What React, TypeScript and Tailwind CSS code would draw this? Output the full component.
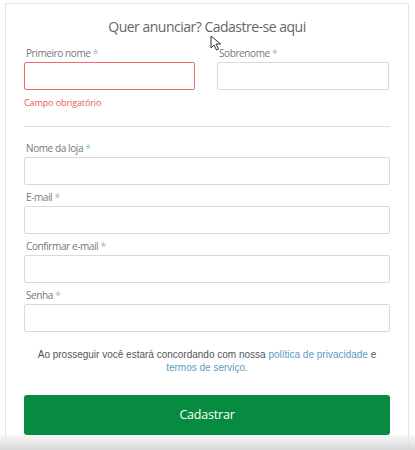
import React from "react";

const Label = ({ text }: { text: string }) => (
  <label className="block pl-[2px] text-[10px] leading-[14px] tracking-[-0.4px] text-[#777]">
    {text} <span className="text-[#8cbfd6]">*</span>
  </label>
);

const Field = ({ label, className = "" }: { label: string; className?: string }) => (
  <div className={className}>
    <Label text={label} />
    <input className="mt-[2px] block h-[28px] w-full rounded-[2px] border border-[#d9d9d9] bg-white outline-none" />
  </div>
);

export default function App() {
  return (
    <div
      className="relative h-[450px] w-[415px] overflow-hidden bg-white pt-[3px]"
      style={{ fontFamily: '"Open Sans", sans-serif' }}
    >
      <div className="ml-[5px] w-[404px] border border-[#e3e3e3] px-[18px] pb-[20px] pt-[13px]">
        <h1 className="text-center text-[14px] leading-[20px] tracking-[-0.5px] text-[#666]">
          Quer anunciar? Cadastre-se aqui
        </h1>

        {/* nome + sobrenome */}
        <div className="mt-[9px] flex gap-[22px]">
          <div className="w-[171px]">
            <Label text="Primeiro nome" />
            <input className="mt-[2px] block h-[28px] w-full rounded-[2px] border border-[#ef6b6b] bg-white outline-none" />
            <p className="mt-[6px] text-[9px] leading-[13px] tracking-[-0.1px] text-[#e25b52]">
              Campo obrigatório
            </p>
          </div>
          <div className="w-[172px]">
            <Label text="Sobrenome" />
            <input className="mt-[2px] block h-[28px] w-full rounded-[2px] border border-[#d9d9d9] bg-white outline-none" />
          </div>
        </div>

        <hr className="mt-[17px] border-t border-[#dcdcdc]" />

        <Field label="Nome da loja" className="mt-[14px]" />
        <Field label="E-mail" className="mt-[5px]" />
        <Field label="Confirmar e-mail" className="mt-[5px]" />
        <Field label="Senha" className="mt-[5px]" />

        <p
          className="mt-[16px] text-center text-[10px] leading-[13px] text-[#555]"
          style={{ fontFamily: '"Liberation Sans", Arial, sans-serif' }}
        >
          Ao prosseguir você estará concordando com nossa{" "}
          <a className="text-[#5c9dbf]">política de privacidade</a> e
          <br />
          <a className="text-[#5c9dbf]">termos de serviço.</a>
        </p>

        <button className="mt-[21px] block h-[40px] w-full rounded-[3px] bg-[#078b41] text-[12.5px] tracking-[-0.2px] text-white">
          Cadastrar
        </button>
      </div>

      {/* mouse cursor */}
      <svg
        className="absolute left-[210px] top-[35px]"
        width="12"
        height="16"
        viewBox="0 0 12 16"
      >
        <path
          d="M1 1 L1 13 L4 10 L6.5 15 L8.5 14 L6 9 L10.5 9 Z"
          fill="#fff"
          stroke="#333"
          strokeWidth="1"
          strokeLinejoin="round"
        />
      </svg>

      {/* bottom shade */}
      <div className="pointer-events-none absolute bottom-0 left-0 h-[15px] w-full bg-gradient-to-b from-[#f4f4f4]/60 to-[#d8d8d8]" />
    </div>
  );
}
